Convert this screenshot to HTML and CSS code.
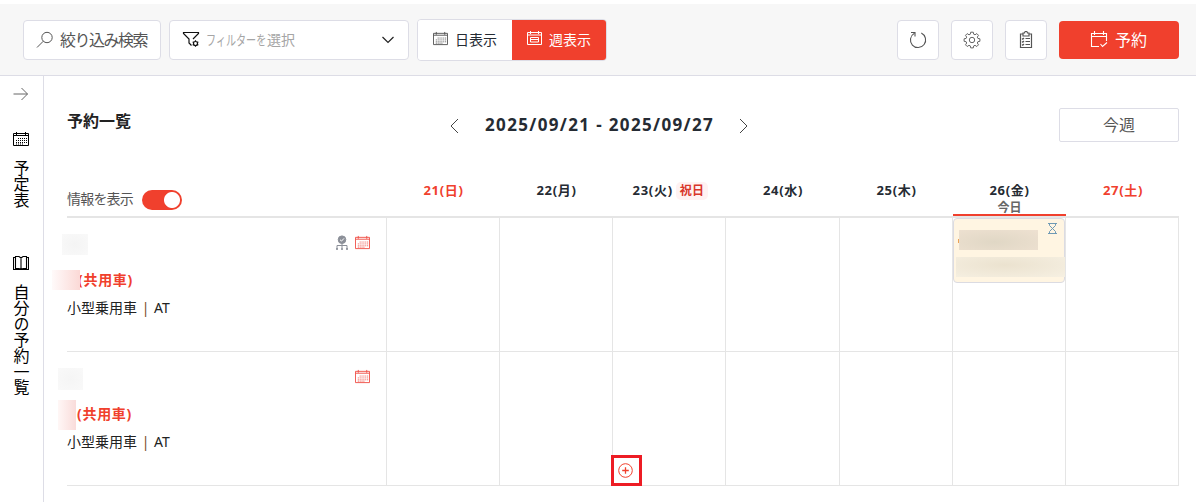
FILE: index.html
```html
<!DOCTYPE html>
<html lang="ja">
<head>
<meta charset="utf-8">
<title>予約一覧</title>
<link rel="stylesheet" href="styles.css">
</head>
<body>
<svg class="sprite" width="0" height="0">
  <symbol id="calendar" viewBox="0 0 16 16">
    <path d="M.5 2.500h15v12H.5zM.5 4.500h15M3.500 1v3M12.500 1v3" fill="none" stroke="currentColor"/>
    <path d="M5 7.500h9M3 9.500h11M3 11.500h11M3 13h8" fill="none" stroke="currentColor" stroke-dasharray="1 1"/>
  </symbol>
</svg>
<header class="toolbar">
  <button class="btn search">
    <svg width="18" height="18" viewBox="0 0 18 18" fill="none" stroke="#555"><circle cx="11" cy="6.500" r="5.200"/><path d="M7.300 10.200L1 16.500"/></svg>
    <span>絞り込み検索</span>
  </button>
  <div class="btn filter">
    <svg width="18" height="18" viewBox="0 0 18 18" fill="none" stroke="#111" stroke-width="1.200"><path d="M9.500 14.500L7 12V8L1.500 2.500V1.500h15v1L11 8"/><circle cx="13.500" cy="12.500" r="2"/><path d="M13.500 9.200v1.300M13.500 14.500v1.300M10.700 10.900l1.100.6M15.200 13.500l1.100.6M10.700 14.100l1.100-.6M15.200 11.500l1.100-.6"/></svg>
    <span class="kana">フィルターを</span><span class="hint">選択</span>
    <svg class="chev" width="14" height="8" viewBox="0 0 14 8" fill="none" stroke="#222" stroke-width="1.200"><path d="M1.500 1L7 6.500 12.500 1"/></svg>
  </div>
  <div class="views">
    <button class="view"><svg class="cal" width="15" height="15"><use href="#calendar"/></svg><span>日表示</span></button>
    <button class="view active"><svg width="15" height="15" viewBox="0 0 15 15" fill="none" stroke="currentColor"><path d="M.5 1.500h14v12H.5zM.5 4h14M3.500 0v3M11.500 0v3M3.500 6.500h8v4.500h-8zM3.500 8.500h8"/></svg><span>週表示</span></button>
  </div>
  <div class="actions">
    <button class="btn icon"><svg width="18" height="18" viewBox="0 0 18 18" fill="none" stroke="#555" stroke-width="1.100"><path d="M12.300 2.100A7.600 7.600 0 1 1 5.200 2.400M2 1.500h4v4"/></svg></button>
    <button class="btn icon"><svg width="18" height="18" viewBox="0 0 18 18" fill="none" stroke="#666"><path d="M7.700 1.200h2.600l.4 2 1.300.6 1.800-1.200 1.700 1.700-1.200 1.800.6 1.300 2 .4v2.500l-2 .4-.6 1.300 1.200 1.800-1.700 1.700-1.800-1.200-1.300.6-.4 2H7.700l-.4-2-1.300-.6-1.800 1.200-1.700-1.700L3.700 12l-.6-1.300-2-.4V7.800l2-.4.6-1.300-1.200-1.800 1.700-1.700L6 3.800l1.300-.6z"/><circle cx="9" cy="9" r="2.700"/></svg></button>
    <button class="btn icon"><svg width="16" height="18" viewBox="0 0 16 18" fill="none" stroke="#555" stroke-width="1.200"><path d="M5 3H2.500v13.500h11V3H11M5 2h1.500a1.500 1.500 0 0 1 3 0H11v3H5zM7.500 7.500H12M7.500 10.500H12M7.500 13.500H12M4 7.500l.8.700L6 7M4 10.500l.8.700L6 10M4 13.500l.8.700L6 13"/></svg></button>
    <button class="reserve"><svg width="18" height="17" viewBox="0 0 18 17" fill="none" stroke="#fff" stroke-width="1.100"><path d="M9 15.500H1.500V2.500h15V10M1.500 5.500h15M4.500 0v4M13.500 0v4M10.500 13l2 2.500 4.500-4"/></svg><span>予約</span></button>
  </div>
</header>
<div class="body">
  <nav class="side">
    <svg width="16" height="14" viewBox="0 0 16 14" fill="none" stroke="#666"><path d="M.5 7h14M8.500 1l6 6-6 6"/></svg>
    <svg class="navcal" width="16" height="16"><use href="#calendar"/></svg>
    <span class="vert">予定表</span>
    <svg class="book" width="16" height="16" viewBox="0 0 16 16" fill="none" stroke="#000" stroke-width="1.100"><path d="M8 3v11.500M2.500 13.500v-12H6L8 3l2-1.500h3.500v12H10l-2 1-2-1zM2.500 2.500h-2v12h15v-12h-2"/></svg>
    <span class="vert">自分の予約一覧</span>
  </nav>
  <main class="main">
    <div class="top">
      <h1>予約一覧</h1>
      <div class="range">
        <svg width="9" height="16" viewBox="0 0 9 16" fill="none" stroke="#444"><path d="M8 1L1 8l7 7"/></svg>
        <span>2025/09/21 - 2025/09/27</span>
        <svg width="9" height="16" viewBox="0 0 9 16" fill="none" stroke="#444"><path d="M1 1l7 7-7 7"/></svg>
      </div>
      <button class="week">今週</button>
    </div>
    <div class="grid head">
      <div class="info"><span>情報を表示</span><i class="toggle"></i></div>
      <div class="day red">21(日)</div>
      <div class="day">22(月)</div>
      <div class="day holiday">23(火)<span class="badge">祝日</span></div>
      <div class="day">24(水)</div>
      <div class="day">25(木)</div>
      <div class="day today">26(金)<small>今日</small></div>
      <div class="day red">27(土)</div>
    </div>
    <div class="grid row">
      <div class="car">
        <div class="icons">
          <svg width="14" height="16" viewBox="0 0 14 16" fill="#8b8f98" stroke="#8b8f98"><circle cx="7" cy="4.700" r="3.800"/><path d="M5 4.700l1.500 1.400L9 3.400" fill="none" stroke="#fff"/><path d="M7 8.500V13M2 14v-3.500h10V14" fill="none"/><path d="M1.500 13.500h1v1h-1zM6.500 13.500h1v1h-1zM11.500 13.500h1v1h-1z"/></svg>
          <svg class="rc" width="15" height="15"><use href="#calendar"/></svg>
        </div>
        <div class="name">(共用車)</div>
        <div class="type">小型乗用車 <b>|</b> AT</div>
        <i class="mask m1"></i><i class="mask m2"></i>
      </div>
      <div class="cell"></div><div class="cell"></div><div class="cell"></div><div class="cell"></div><div class="cell"></div>
      <div class="cell">
        <div class="event">
          <svg class="glass" width="9" height="11" viewBox="0 0 9 11" fill="none" stroke="#6f9ab5"><path d="M0 .5h9M0 10.500h9M1.500.5v2l6 6v2M7.500.5v2l-6 6v2"/></svg>
          <i class="dot"></i><i class="blur a"></i><i class="blur b"></i>
        </div>
      </div>
      <div class="cell"></div>
    </div>
    <div class="grid row">
      <div class="car">
        <div class="icons"><svg class="rc" width="15" height="15"><use href="#calendar"/></svg></div>
        <div class="name">(共用車)</div>
        <div class="type">小型乗用車 <b>|</b> AT</div>
        <i class="mask m3"></i><i class="mask m4"></i>
      </div>
      <div class="cell"></div><div class="cell"></div>
      <div class="cell"><span class="add"><svg width="15" height="15" viewBox="0 0 15 15" fill="none" stroke="#f0402d"><circle cx="7.500" cy="7.500" r="6.800"/><path d="M7.500 4.200v6.600M4.200 7.500h6.600" stroke-width="1.300"/></svg></span></div>
      <div class="cell"></div><div class="cell"></div><div class="cell"></div><div class="cell"></div>
    </div>
  </main>
</div>
</body>
</html>
```

FILE: styles.css
```css
* { box-sizing: border-box; }
body { margin: 0; padding-top: 4px; height: 502px; overflow: hidden; background: #fff; color: #252b33; font: 14px/20px "Noto Sans", "Noto Sans CJK JP", sans-serif; }
svg { display: block; flex: none; }
.sprite { position: absolute; }
button { font: inherit; padding: 0; color: inherit; border: 0; background: #fff; }
span, .name, .type, .day { white-space: nowrap; }

.toolbar { display: flex; align-items: center; height: 72px; padding: 0 17px 0 23px; background: #f7f7f7; border-bottom: 1px solid #dddde6; }
.btn { display: flex; align-items: center; height: 40px; background: #fff; border: 1px solid #dddde6; border-radius: 4px; }
.search { width: 138px; padding-left: 12px; font-size: 16px; letter-spacing: -1.5px; color: #555; }
.search span { margin-left: 6px; padding-top: 1px; }
.filter { width: 240px; margin-left: 8px; padding-left: 12px; color: #a5a5a5; }
.kana { width: 61px; margin-left: 6px; transform: scaleX(.72); transform-origin: left; }
.chev { margin: 0 13px 0 auto; }
.views { display: flex; height: 42px; width: 190px; margin-left: 8px; border: 1px solid #dddde6; border-radius: 4px; overflow: hidden; }
.view { display: flex; align-items: center; width: 94px; padding-left: 15px; gap: 7px; }
.view svg { margin-top: -3px; }
.view .cal { color: #555; }
.view.active { background: #f0402d; color: #fff; }
.actions { display: flex; align-items: center; gap: 12px; margin-left: auto; }
.icon { width: 42px; justify-content: center; }
.reserve { display: flex; align-items: center; justify-content: center; gap: 7px; width: 120px; height: 38px; padding-right: 1px; color: #fff; background: #f0402d; border-radius: 4px; font-size: 16px; }

.body { display: flex; height: 426px; }
.side { display: flex; flex-direction: column; align-items: center; width: 44px; padding: 11px 2px 0 0; border-right: 1px solid #dddde6; color: #000; }
.navcal { margin: 30px 0 13px; }
.vert { writing-mode: vertical-rl; font-size: 16px; line-height: 16px; letter-spacing: -.1px; }
.book { margin: 47px 0 13px; }

.main { width: 1135px; padding-left: 23px; }
.top { display: grid; grid-template-columns: 383px 1fr 120px; align-items: start; height: 84px; padding-top: 32px; }
h1 { margin: 3px 0 0; font-size: 16px; line-height: 20px; color: #222; }
.range { display: flex; align-items: center; padding-top: 7px; font-size: 17px; line-height: 20px; font-weight: bold; }
.range svg { margin-top: 1px; }
.range span { width: 230px; margin: 0 24px 0 26px; letter-spacing: 1.35px; }
.week { height: 34px; color: #555; border: 1px solid #dddde6; border-radius: 2px; font-size: 16px; }

.grid { display: grid; grid-template-columns: 319px 113px 113px 113px 114px 113px 113px 114px; }
.head { height: 58px; border-bottom: 2px solid #e5e5e5; }
.info { display: flex; align-items: flex-start; padding-top: 29px; color: #555; letter-spacing: -.8px; }
.toggle { width: 40px; height: 20px; margin: 1px 0 0 9px; border-radius: 10px; background: radial-gradient(circle at 30px 10px, #fff 7.500px, #f0402d 8.500px); }
.day { padding: 20px 0 0 2px; text-align: center; font-size: 13px; font-weight: bold; letter-spacing: .7px; }
.red { color: #f0402d; }
.holiday { display: flex; justify-content: center; padding-left: 3px; }
.badge { height: 18px; margin: 2px -1px 0 3px; padding: 0 4px; line-height: 18px; border-radius: 5px; background: #fff2f2; color: #d9362a; font-size: 12px; letter-spacing: .3px; }
.today { height: 56px; margin: 0 -1px 0 1px; border-bottom: 2px solid #f0402d; padding-left: 0; }
.today small { display: block; color: #666; font-size: 12px; line-height: 15px; letter-spacing: 0; }

.row { height: 134px; border-bottom: 1px solid #e5e5e5; }
.car { position: relative; padding-top: 17px; }
.icons { display: flex; justify-content: flex-end; gap: 6px; height: 16px; padding-right: 16px; }
.rc { color: #f0524a; }
.name { margin: 19px 0 0 10px; color: #f0402d; font-weight: bold; font-size: 14px; letter-spacing: .7px; }
.type { margin-top: 8px; color: #222; }
.type b { font-weight: normal; color: #7b4a22; margin: 0 1px; }
.cell { position: relative; border-left: 1px solid #e5e5e5; }
.cell:last-child { border-right: 1px solid #e5e5e5; }
/* redacted labels */
.mask { position: absolute; }
.m1 { left: -5px; top: 16px; width: 26px; height: 21px; background: radial-gradient(#f4f4f4, #f9f9f9); }
.m2 { left: -15px; top: 52px; width: 28px; height: 20px; background: linear-gradient(90deg, #fffafa, #fbd9d6); }
.m3 { left: -9px; top: 16px; width: 25px; height: 22px; background: radial-gradient(#f5f5f5, #f9f9f9); }
.m4 { left: -9px; top: 48px; width: 18px; height: 30px; background: linear-gradient(90deg, #fff7f6, #f9dcda); }
.row:nth-child(3) .name { margin-left: 11px; }
.event { position: relative; width: 112px; height: 65px; border: 1px solid #dbdbe2; border-radius: 4px; background: #fff5e2; }
.glass { position: absolute; right: 7px; top: 4px; }
.dot { position: absolute; left: 4px; top: 20px; width: 2px; height: 4px; background: #eda255; }
.blur { position: absolute; }
.a { left: 5px; top: 11px; width: 79px; height: 20px; background: radial-gradient(ellipse at 45% 60%, #e0d7c5, #eee1d1); }
.b { left: 2px; top: 38px; width: 109px; height: 20px; background: radial-gradient(ellipse at 45% 40%, #ebe2cf, #f6f0e2); }
/* highlighted add button */
.add { position: absolute; left: -2px; bottom: -1px; display: flex; align-items: center; justify-content: center; width: 31px; height: 31px; padding-right: 2px; border: 3px solid #ed1c24; background: #fff; }
```
